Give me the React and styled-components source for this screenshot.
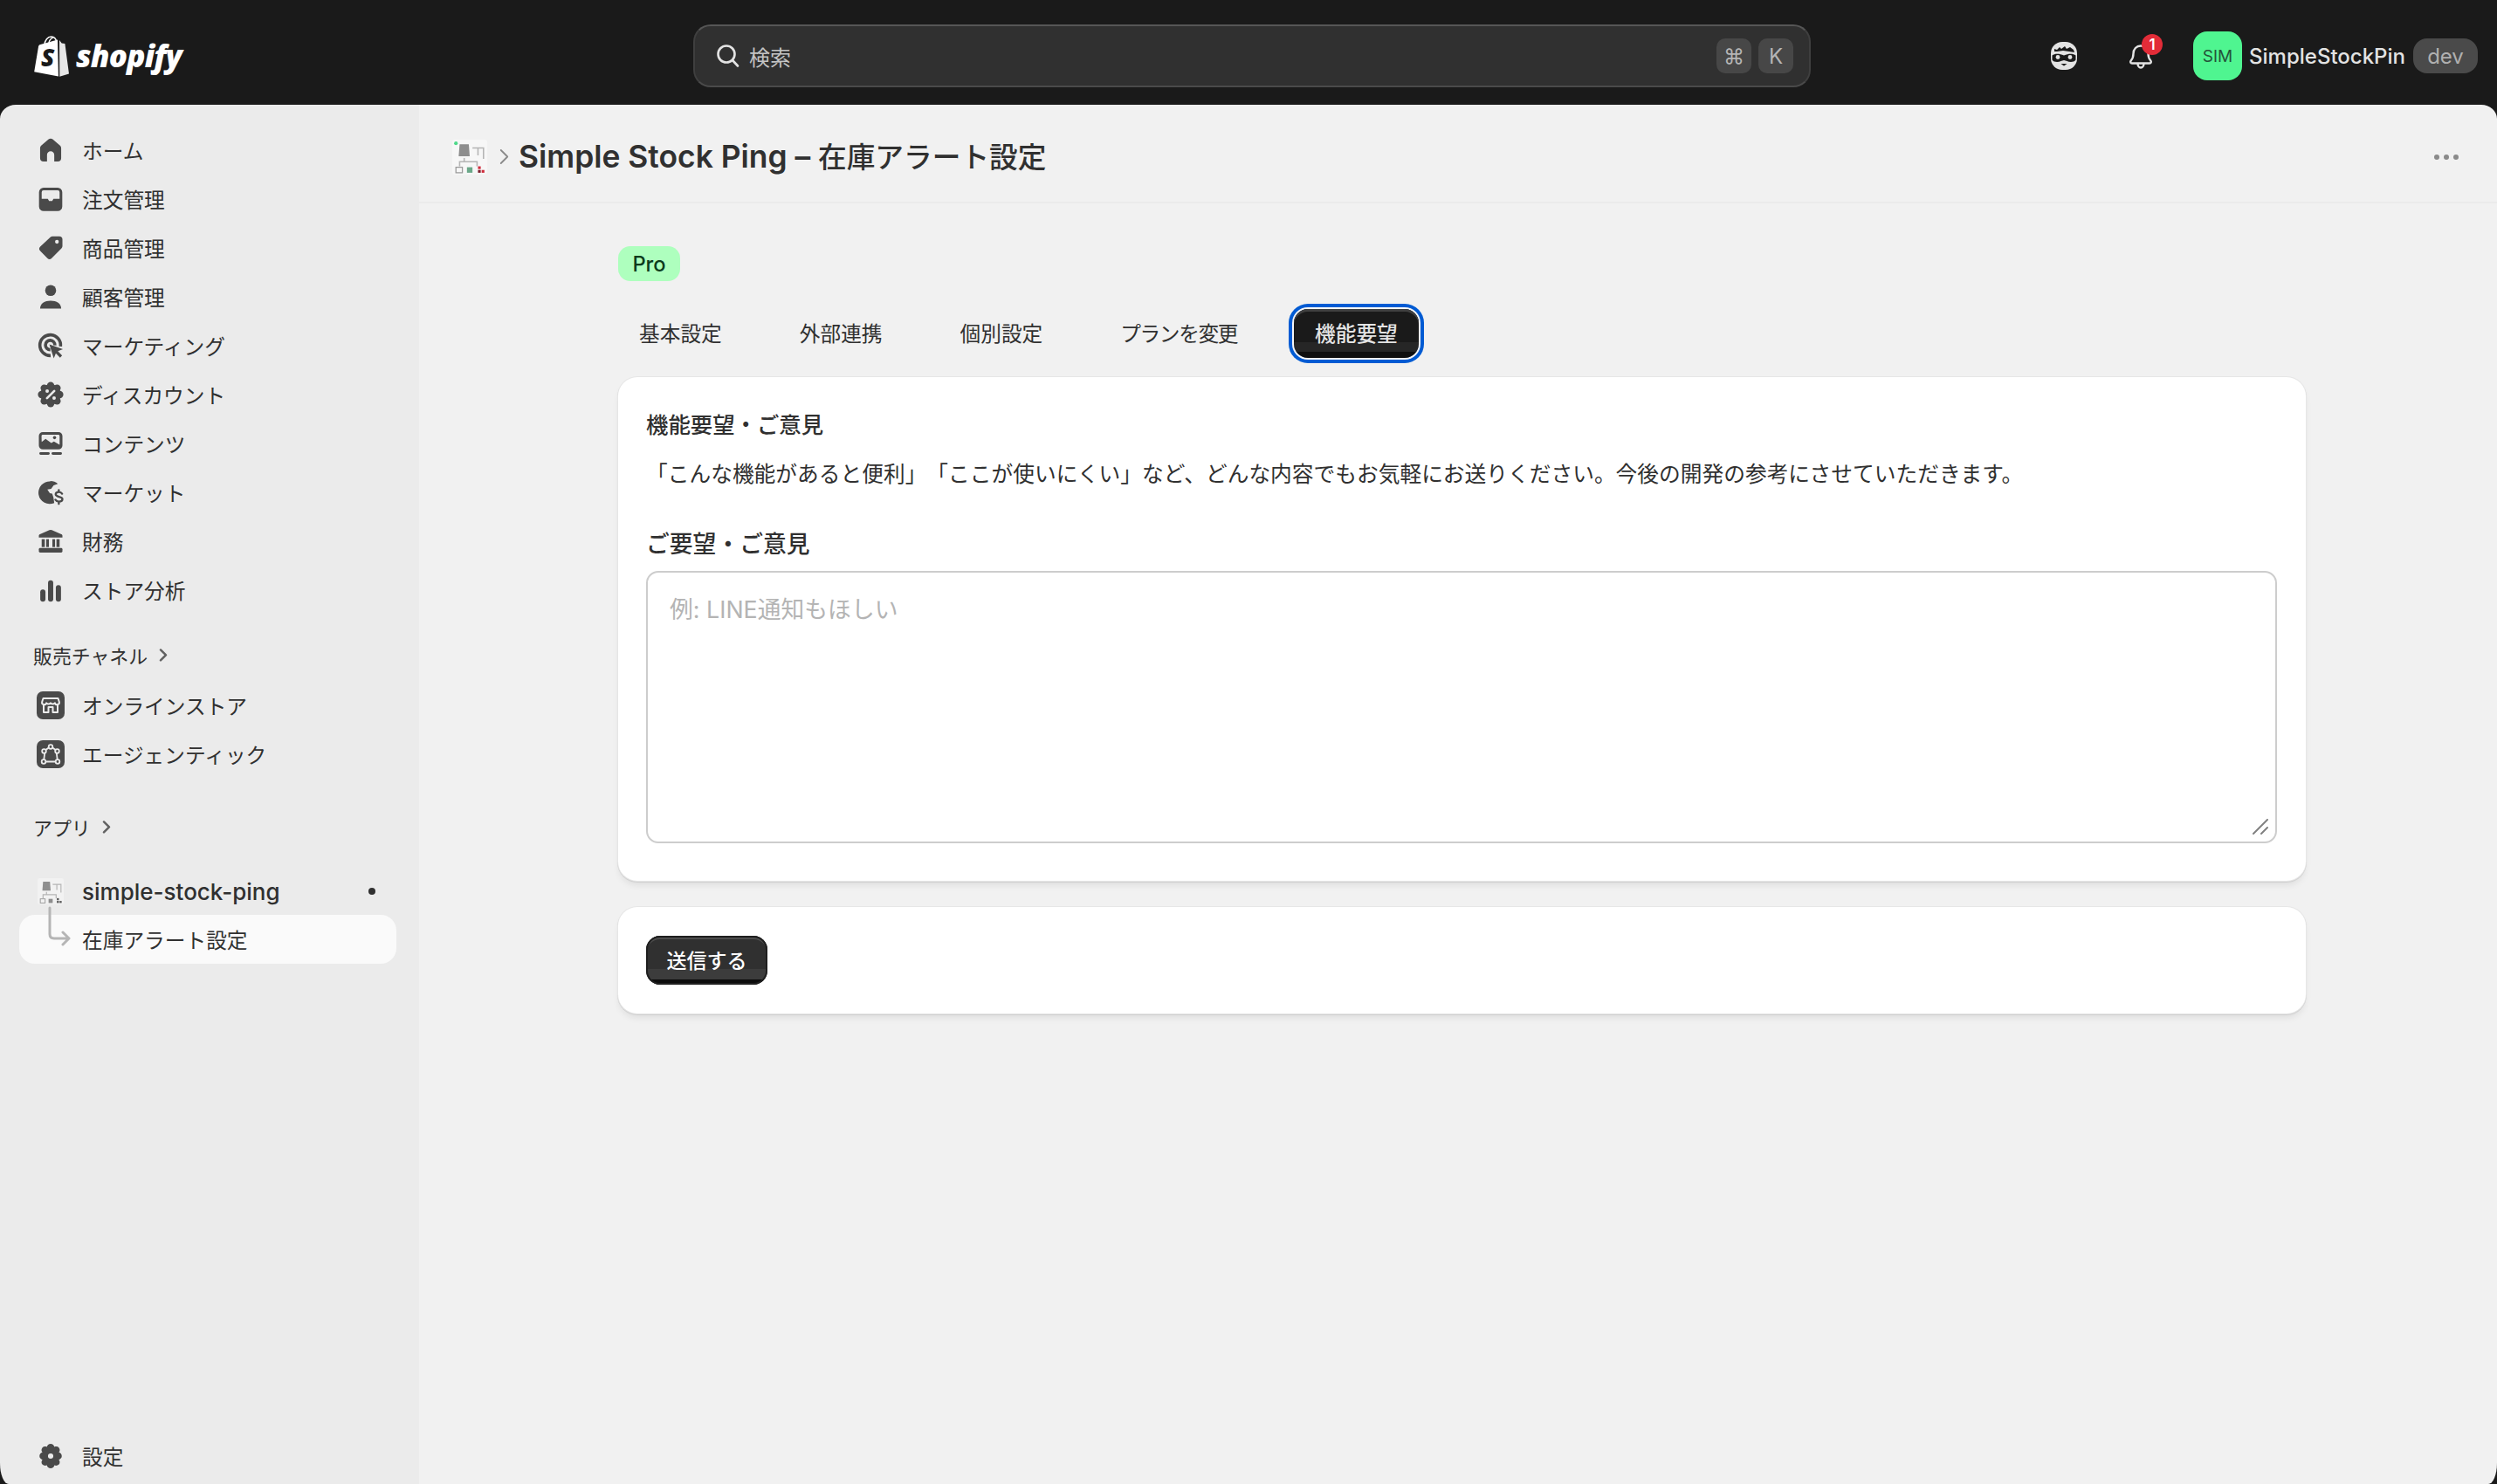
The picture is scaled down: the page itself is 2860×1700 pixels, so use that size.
import React from "react";
import styled, { createGlobalStyle } from "styled-components";

const GlobalStyle = createGlobalStyle`
  html, body {
    margin: 0;
    padding: 0;
    background: #1a1a1a;
  }
  body {
    font-family: Inter, "Noto Sans CJK JP", sans-serif;
    color: #303030;
  }
  * {
    box-sizing: border-box;
  }
`;

const Frame = styled.div`
  width: 2860px;
  height: 1700px;
  display: flex;
  flex-direction: column;
  overflow: hidden;
`;

const TopBar = styled.header`
  height: 120px;
  flex: none;
  display: flex;
  align-items: center;
  padding-top: 8px;
  background: #1a1a1a;
`;

const LogoSlot = styled.div`
  width: 794px;
  flex: none;
  padding-left: 39px;
  display: flex;
  align-items: center;
  gap: 8px;
`;

const LogoText = styled.span`
  font-family: "Open Sans", sans-serif;
  font-style: italic;
  font-weight: 800;
  font-size: 35px;
  line-height: 48px;
  letter-spacing: -0.8px;
  color: #fff;
`;

const SearchBox = styled.div`
  width: 1280px;
  height: 72px;
  flex: none;
  display: flex;
  align-items: center;
  padding: 0 18px 0 22px;
  background: #303030;
  border: 2px solid #3f3f3f;
  border-top-color: #565656;
  border-bottom-color: #4a4a4a;
  border-radius: 20px;
`;

const SearchText = styled.span`
  margin-left: 8px;
  flex: 1;
  font-size: 24px;
  color: #c4c4c4;
`;

const Key = styled.span`
  width: 40px;
  height: 40px;
  margin-left: 8px;
  display: flex;
  align-items: center;
  justify-content: center;
  font-size: 24px;
  color: #b5b5b5;
  background: #474747;
  border-radius: 10px;
`;

const TopRight = styled.div`
  flex: 1;
  display: flex;
  align-items: center;
  justify-content: flex-end;
  padding-right: 22px;
`;

const BellWrap = styled.div`
  position: relative;
  width: 30px;
  height: 30px;
  margin-left: 58px;
  margin-right: 45px;
`;

const BellBadge = styled.span`
  position: absolute;
  left: 16px;
  top: -10px;
  width: 24px;
  height: 24px;
  display: flex;
  align-items: center;
  justify-content: center;
  background: #e22c38;
  color: #fff;
  border-radius: 50%;
  font-size: 17px;
  font-weight: 600;
`;

const Avatar = styled.div`
  width: 56px;
  height: 56px;
  display: flex;
  align-items: center;
  justify-content: center;
  background: #4ff590;
  color: #24533a;
  border-radius: 16px;
  font-size: 19px;
`;

const StoreName = styled.span`
  margin-left: 8px;
  font-size: 24px;
  font-weight: 500;
  color: #e3e3e3;
`;

const DevPill = styled.span`
  width: 74px;
  height: 40px;
  margin-left: 9px;
  display: flex;
  align-items: center;
  justify-content: center;
  font-size: 24px;
  color: #b0b0b0;
  background: #4a4a4a;
  border-radius: 16px;
`;

const Body = styled.div`
  flex: 1;
  min-height: 0;
  display: flex;
  overflow: hidden;
  border-radius: 18px 18px 10px 10px / 16px 16px 24px 24px;
`;

const Sidebar = styled.nav`
  width: 480px;
  flex: none;
  display: flex;
  flex-direction: column;
  padding: 24px 26px 4px 22px;
  background: #ebebeb;
`;

const NavRow = styled.div`
  position: relative;
  height: 56px;
  flex: none;
  display: flex;
  align-items: center;
  gap: 18px;
  padding-left: 18px;
  font-size: 23.7px;
  color: #303030;
  border-radius: 18px;
  background: ${(p) => (p.$selected ? "#fafafa" : "transparent")};
  margin-top: ${(p) => p.$top || 0}px;
`;

const IconSlot = styled.span`
  width: 36px;
  height: 36px;
  flex: none;
  display: flex;
  align-items: center;
  justify-content: center;
`;

const AppName = styled.span`
  flex: 1;
  font-size: 26px;
  font-weight: 500;
`;

const UnreadDot = styled.span`
  width: 8px;
  height: 8px;
  margin-right: 24px;
  border-radius: 50%;
  background: #303030;
`;

const Connector = styled.svg`
  position: absolute;
  left: 33px;
  top: -10px;
`;

const SectionHead = styled.div`
  height: 56px;
  flex: none;
  display: flex;
  align-items: center;
  gap: 12px;
  padding-left: 16px;
  font-size: 21.9px;
  color: #303030;
  margin-top: ${(p) => p.$top}px;
`;

const SidebarFoot = styled.div`
  margin-top: auto;
`;

const Main = styled.main`
  flex: 1;
  min-width: 0;
  background: #f1f1f1;
`;

const PageHeader = styled.div`
  height: 113px;
  display: flex;
  align-items: center;
  padding: 8px 44px 0 38px;
  border-bottom: 2px solid #ebebeb;
`;

const Crumb = styled.div`
  display: flex;
  align-items: center;
  gap: 12px;
`;

const PageTitle = styled.h1`
  flex: 1;
  margin: 0 0 5px 9px;
  font-size: 32.7px;
  font-weight: 500;
  color: #303030;
`;

const TitleLatin = styled.span`
  font-size: 35.4px;
  font-weight: 600;
`;

const Content = styled.div`
  width: 1933px;
  margin-left: 228px;
  padding-top: 49px;
`;

const ProBadge = styled.span`
  width: 71px;
  height: 40px;
  display: flex;
  align-items: center;
  justify-content: center;
  font-size: 23.7px;
  font-weight: 500;
  color: #0c3b1c;
  background: #aeffbe;
  border-radius: 14px;
`;

const Tabs = styled.div`
  display: flex;
  gap: 41px;
  margin-top: 32px;
`;

const Tab = styled.button`
  height: 56px;
  padding: 0 24px 2px;
  font-family: inherit;
  font-size: 23.7px;
  font-weight: ${(p) => (p.$active ? 500 : 400)};
  letter-spacing: ${(p) => (p.$narrow ? "-1.4px" : "0")};
  color: ${(p) => (p.$active ? "#e3e3e3" : "#303030")};
  border: none;
  border-radius: 16px;
  background: ${(p) =>
    p.$active
      ? "linear-gradient(#1a1a1a 0 68%, #262626 68% 88%, #0f0f0f 88%)"
      : "transparent"};
  box-shadow: ${(p) =>
    p.$active
      ? "inset 0 3px 0 #3f3f3f, 0 0 0 2px #f6f6f6, 0 0 0 6px #005bd3"
      : "none"};
`;

const Card = styled.section`
  padding: ${(p) => p.$pad};
  margin-top: ${(p) => p.$top}px;
  background: #fff;
  border-radius: 22px;
  box-shadow: 0 0 0 1px #e6e6e6, 0 1px 0 1px #d0d0d0, 0 6px 8px -2px rgba(26, 26, 26, 0.1);
`;

const CardHeading = styled.h2`
  margin: 0;
  font-size: 25.4px;
  line-height: 36px;
  font-weight: 500;
  color: #303030;
`;

const Lead = styled.p`
  margin: 18px 0 0;
  font-size: 24.73px;
  line-height: 40px;
  text-spacing-trim: space-all;
  color: #303030;
`;

const FieldLabel = styled.label`
  display: block;
  margin-top: 42px;
  font-size: 26.8px;
  line-height: 36px;
  font-weight: 500;
  color: #303030;
`;

const AreaWrap = styled.div`
  position: relative;
  margin-top: 13px;
  height: 312px;
`;

const Area = styled.textarea`
  display: block;
  width: 100%;
  height: 100%;
  padding: 22px 25px;
  resize: none;
  font-family: inherit;
  font-size: 26.8px;
  line-height: 40px;
  color: #303030;
  border: 2px solid #cdcdcd;
  border-radius: 14px;
  outline: none;
  background: #fff;
  &::placeholder {
    color: #b4b4b4;
  }
`;

const Grip = styled.svg`
  position: absolute;
  right: 10px;
  bottom: 10px;
`;

const SubmitButton = styled.button`
  width: 139px;
  height: 56px;
  display: block;
  padding: 0 0 2px;
  font-family: inherit;
  font-size: 23px;
  font-weight: 500;
  color: #fff;
  border: none;
  border-radius: 16px;
  background: linear-gradient(#303030 0 68%, #3c3c3c 68% 90%, #0c0c0c 90%);
  box-shadow: inset 0 0 0 2px #1f1f1f, inset 0 4px 0 #4d4d4d;
`;

const paths = {
  home: (
    <path d="M10 2.6a2 2 0 0 1 1.3.5l4.7 4a2 2 0 0 1 .7 1.5V15a2.2 2.2 0 0 1-2.2 2.2h-2.2V13a2.3 2.3 0 0 0-4.6 0v4.200H5.500A2.200 2.200 0 0 1 3.300 15V8.600a2 2 0 0 1 .7-1.500l4.700-4A2 2 0 0 1 10 2.600z" />
  ),
  orders: (
    <path
      fillRule="evenodd"
      d="M5.500 2.800h9a2.900 2.900 0 0 1 2.900 2.900v9a2.900 2.900 0 0 1-2.900 2.900h-9a2.900 2.900 0 0 1-2.900-2.900v-9a2.900 2.900 0 0 1 2.900-2.900zM4.300 5.700v4.200h3.900l.8 1.400h2l.8-1.400h3.900V5.700a1.200 1.200 0 0 0-1.200-1.200h-9a1.200 1.200 0 0 0-1.200 1.200z"
    />
  ),
  tag: (
    <path
      fillRule="evenodd"
      d="M11.200 2.600h4.300a2 2 0 0 1 2 2v4.300a2 2 0 0 1-.6 1.400l-6.200 6.200a2 2 0 0 1-2.800 0l-4.500-4.500a2 2 0 0 1 0-2.800l6.400-6a2 2 0 0 1 1.400-.6zM14 4.900a1.200 1.200 0 1 0 0 2.400 1.200 1.200 0 0 0 0-2.400z"
    />
  ),
  person: (
    <>
      <circle cx="10" cy="6" r="3.500" />
      <path d="M3.300 17.500c0-3.200 2.900-5 6.700-5s6.700 1.800 6.700 5z" />
    </>
  ),
  marketing: (
    <>
      <path
        d="M10 16.300A6.600 6.600 0 1 1 16.300 10.500M9.800 12.600A3 3 0 1 1 12.700 9.800"
        fill="none"
        stroke="#4a4a4a"
        strokeWidth="2"
      />
      <path d="M9.200 9.200l8.600 3-3.200 1.300 2.700 2.800-1.300 1.300-2.700-2.800-1.300 3.300z" />
    </>
  ),
  discount: (
    <>
      <circle cx="10" cy="10" r="6.500" />
      {[0, 45, 90, 135, 180, 225, 270, 315].map((a) => (
        <circle
          key={a}
          cx={10 + 5.8 * Math.cos((a * Math.PI) / 180)}
          cy={10 + 5.8 * Math.sin((a * Math.PI) / 180)}
          r="2.300"
        />
      ))}
      <path d="M12.300 7.700l-4.600 4.600" stroke="#ebebeb" strokeWidth="1.500" strokeLinecap="round" />
      <circle cx="7.800" cy="7.800" r="1.100" fill="#ebebeb" />
      <circle cx="12.200" cy="12.200" r="1.100" fill="#ebebeb" />
    </>
  ),
  content: (
    <>
      <path
        fillRule="evenodd"
        d="M5 2.800h10a2.500 2.500 0 0 1 2.500 2.500v6a2.500 2.500 0 0 1-2.500 2.500H5a2.500 2.500 0 0 1-2.500-2.500v-6A2.500 2.500 0 0 1 5 2.800zM4.300 9l2.500-1.900 3.600 2.600 1.700-1 3.600 2.200V5.300a.8.800 0 0 0-.8-.8H5a.8.800 0 0 0-.8.8z"
      />
      <circle cx="12.500" cy="6.300" r="1" />
      <rect x="2.800" y="15.600" width="6.600" height="1.600" rx="0.800" />
      <rect x="10.600" y="15.600" width="6.600" height="1.600" rx="0.800" />
    </>
  ),
  markets: (
    <>
      <path d="M9.800 2.800a7.200 7.200 0 0 1 4.800 1.800l-2.700 1-1.600 2.200-2.400.4 1.600 2.400 1.500.3.800 2.400.5 3.500a7.200 7.200 0 1 1-2.500-13.800z" />
      <path
        d="M17.300 10.900c-.5-.8-1.300-1.100-2.100-1.100-1.200 0-2 .6-2 1.500 0 2 4.300 1 4.300 3 0 .9-.9 1.600-2.200 1.600-.9 0-1.800-.4-2.300-1.200M15.200 8.500v1.300M15.200 15.900v1.400"
        fill="none"
        stroke="#4a4a4a"
        strokeWidth="1.300"
        strokeLinecap="round"
      />
    </>
  ),
  finance: (
    <>
      <path d="M9.200 2.900a2 2 0 0 1 1.600 0l6 2.600c.5.200.7.600.7 1v1.200H2.500V6.500c0-.4.200-.8.700-1z" />
      <rect x="4.300" y="8.700" width="2" height="5" />
      <rect x="7.200" y="8.700" width="1.700" height="5" />
      <rect x="11.100" y="8.700" width="1.700" height="5" />
      <rect x="13.700" y="8.700" width="2" height="5" />
      <rect x="2.500" y="14.300" width="15" height="2.900" rx="0.800" />
    </>
  ),
  analytics: (
    <>
      <rect x="3.400" y="9.600" width="3.300" height="7.700" rx="1.650" />
      <rect x="8.350" y="3.800" width="3.300" height="13.500" rx="1.650" />
      <rect x="13.300" y="6.800" width="3.300" height="10.500" rx="1.650" />
    </>
  ),
  settings: (
    <path
      fillRule="evenodd"
      d="M10 2.200c1.200 0 2.200.9 2.400 2 .9-.5 2.100-.3 2.900.5.800 1 .6 2.200-.1 3 1.100.3 1.900 1.200 1.900 2.300s-.8 2-1.900 2.300c.7.800.9 2 .1 3-.8.800-2 1-2.900.5-.2 1.100-1.200 2-2.400 2s-2.200-.9-2.400-2c-.9.500-2.100.3-2.900-.5-.8-1-.6-2.200.1-3-1.100-.3-1.900-1.200-1.900-2.300s.8-2 1.900-2.300c-.7-.8-.9-2-.1-3 .8-.8 2-1 2.900-.5.200-1.100 1.200-2 2.400-2zM10 8.300a1.700 1.700 0 1 0 0 3.400 1.700 1.700 0 0 0 0-3.400z"
    />
  ),
};

const NavIcon = ({ name }) => (
  <svg width="36" height="36" viewBox="0 0 20 20" fill="#4a4a4a">
    {paths[name]}
  </svg>
);

const StoreIcon = () => (
  <svg width="32" height="32" viewBox="0 0 32 32">
    <rect width="32" height="32" rx="7" fill="#4a4a4a" />
    <path
      d="M8 14v10h5.500v-6h5v6H24V14M7.500 8h17l1.300 4a2.500 2.500 0 0 1-4.900 1.300 3.200 3.200 0 0 1-4.900 0 3.200 3.200 0 0 1-4.900 0A2.500 2.500 0 0 1 6.200 12z"
      fill="none"
      stroke="#ebebeb"
      strokeWidth="2"
      strokeLinejoin="round"
    />
  </svg>
);

const AgenticIcon = () => (
  <svg width="32" height="32" viewBox="0 0 32 32">
    <rect width="32" height="32" rx="7" fill="#4a4a4a" />
    <g fill="none" stroke="#ebebeb" strokeWidth="1.800">
      <path d="M13.500 8.800L9.800 11.500M18.500 8.800l3.700 2.700M9.300 14l-1 8M22.700 14l1 8M10.500 24.500h11" />
      <circle cx="16" cy="7.500" r="2.300" />
      <circle cx="8.500" cy="12.500" r="2.300" />
      <circle cx="23.500" cy="12.500" r="2.300" />
      <circle cx="8" cy="24.500" r="2.300" />
      <circle cx="24" cy="24.500" r="2.300" />
    </g>
  </svg>
);

const Chevron = ({ size = 12, color = "#616161", weight = 2 }) => (
  <svg width={size} height={size * 1.4} viewBox="0 0 10 14" fill="none">
    <path d="M2.500 2l5 5-5 5" stroke={color} strokeWidth={weight} strokeLinecap="round" strokeLinejoin="round" />
  </svg>
);

// small app thumbnail, same drawing in the sidebar and the page header
const AppThumb = ({ size = 30, tinted }) => (
  <svg width={size} height={size} viewBox="0 0 38 38">
    <rect width="38" height="38" rx="3" fill={tinted ? "#f7f7f7" : "#f2f2f2"} />
    {tinted && <circle cx="4" cy="4" r="2" fill="#4fd98a" />}
    <path d="M8 5h10l1 13H7z" fill="#8e8e8e" />
    <path d="M22 9h12v12M28 9v8M13 20v4h-5v5M13 24h14v5" fill="none" stroke="#b5b5b5" strokeWidth="1.500" />
    <rect x="4" y="30" width="7" height="6" fill="none" stroke="#9a9a9a" strokeWidth="1.200" />
    <rect x="16" y="30" width="6" height="6" fill={tinted ? "#6ba889" : "#8e8e8e"} />
    <rect x="28" y="29" width="3" height="3" fill={tinted ? "#cf2b3b" : "#5a5a5a"} />
    <rect x="32" y="33" width="3" height="3" fill={tinted ? "#cf2b3b" : "#5a5a5a"} />
    <rect x="28" y="33" width="3" height="3" fill={tinted ? "#7a1d2a" : "#5a5a5a"} />
  </svg>
);

const ShopifyBag = () => (
  <svg width="40" height="47" viewBox="0 0 40 47">
    <path
      d="M0.200 41.300L5 12.500c.3-1.400 1-2 2.300-2.400L27 4.500l.9 42z"
      fill="#fff"
    />
    <path d="M29 5l2.700 3.600 3.700.5L40 43.600 29.300 46.800z" fill="#e6e6e6" />
    <path
      d="M12 10.500C12.300 5 15.600 1 19.800 1c3.600 0 5.400 2.700 6.200 6.300M16.800 9c.4-3.300 2.300-6.300 5.700-7.400"
      fill="none"
      stroke="#fff"
      strokeWidth="1.500"
    />
    <text x="8" y="35" fontFamily="'Open Sans', sans-serif" fontStyle="italic" fontWeight="800" fontSize="28" fill="#1a1a1a">
      S
    </text>
  </svg>
);

const SearchIcon = () => (
  <svg width="32" height="32" viewBox="0 0 32 32" fill="none">
    <circle cx="14" cy="14" r="9.500" stroke="#e3e3e3" strokeWidth="2.600" />
    <path d="M21 21l6 6.500" stroke="#e3e3e3" strokeWidth="2.600" strokeLinecap="round" />
  </svg>
);

const MascotIcon = () => (
  <svg width="30" height="32" viewBox="0 0 30 32">
    <rect width="30" height="32" rx="13" fill="#e3e3e3" />
    <path d="M4 11V8l3 1 3-3 2 2 4-3 2 3 4-2 4 3 1 3-6-1-7-1-7 1z" fill="#1a1a1a" />
    <path d="M1.500 15.500c3-2.500 8-2.500 13.500 0 5.500-2.500 10.500-2.500 13.500 0v5c-2 3-7 3-10 1.500l-3.500-1-3.500 1c-3 1.500-8 1.500-10-1.500z" fill="#1a1a1a" />
    <circle cx="8" cy="17.500" r="2.400" fill="#e3e3e3" />
    <circle cx="22" cy="17.500" r="2.400" fill="#e3e3e3" />
    <path d="M11.500 25h7l-3.500 2.500z" fill="#1a1a1a" />
  </svg>
);

const BellIcon = () => (
  <svg width="30" height="32" viewBox="0 0 30 32" fill="none">
    <path
      d="M15 3.500c-5 0-8.500 3.800-8.500 9 0 4-1 6-2.800 8-1 1.300-.5 3 1.300 3h20c1.800 0 2.300-1.700 1.300-3-1.800-2-2.800-4-2.800-8 0-5.200-3.500-9-8.500-9zM11.500 23.800c0 2.600 1.500 4.700 3.500 4.700s3.500-2.100 3.500-4.700"
      stroke="#e3e3e3"
      strokeWidth="2.400"
      strokeLinejoin="round"
    />
  </svg>
);

const navItems = [
  ["home", "ホーム"],
  ["orders", "注文管理"],
  ["tag", "商品管理"],
  ["person", "顧客管理"],
  ["marketing", "マーケティング"],
  ["discount", "ディスカウント"],
  ["content", "コンテンツ"],
  ["markets", "マーケット"],
  ["finance", "財務"],
  ["analytics", "ストア分析"],
];

const tabs = ["基本設定", "外部連携", "個別設定", "プランを変更", "機能要望"];

export default function App() {
  return (
    <Frame>
      <GlobalStyle />
      <TopBar>
        <LogoSlot>
          <ShopifyBag />
          <LogoText>shopify</LogoText>
        </LogoSlot>
        <SearchBox>
          <SearchIcon />
          <SearchText>検索</SearchText>
          <Key>⌘</Key>
          <Key>K</Key>
        </SearchBox>
        <TopRight>
          <MascotIcon />
          <BellWrap>
            <BellIcon />
            <BellBadge>1</BellBadge>
          </BellWrap>
          <Avatar>SIM</Avatar>
          <StoreName>SimpleStockPin</StoreName>
          <DevPill>dev</DevPill>
        </TopRight>
      </TopBar>

      <Body>
        <Sidebar>
          {navItems.map(([icon, label]) => (
            <NavRow key={icon}>
              <IconSlot>
                <NavIcon name={icon} />
              </IconSlot>
              {label}
            </NavRow>
          ))}

          <SectionHead $top={18}>
            販売チャネル
            <Chevron />
          </SectionHead>
          <NavRow $top={2}>
            <IconSlot>
              <StoreIcon />
            </IconSlot>
            オンラインストア
          </NavRow>
          <NavRow>
            <IconSlot>
              <AgenticIcon />
            </IconSlot>
            エージェンティック
          </NavRow>

          <SectionHead $top={27}>
            アプリ
            <Chevron />
          </SectionHead>
          <NavRow $top={18}>
            <IconSlot>
              <AppThumb />
            </IconSlot>
            <AppName>simple-stock-ping</AppName>
            <UnreadDot />
          </NavRow>
          <NavRow $selected $top={-1}>
            <Connector width="26" height="46" viewBox="0 0 26 46" fill="none">
              <path
                d="M2 2v30c0 3 1.500 5 5 5h16M17 30l7 7-7 7"
                stroke="#b5b5b5"
                strokeWidth="3"
                strokeLinecap="round"
                strokeLinejoin="round"
              />
            </Connector>
            <IconSlot />
            在庫アラート設定
          </NavRow>

          <SidebarFoot>
            <NavRow>
              <IconSlot>
                <NavIcon name="settings" />
              </IconSlot>
              設定
            </NavRow>
          </SidebarFoot>
        </Sidebar>

        <Main>
          <PageHeader>
            <Crumb>
              <AppThumb size={40} tinted />
              <Chevron size={15} color="#8a8a8a" weight={1.2} />
            </Crumb>
            <PageTitle>
              <TitleLatin>Simple Stock Ping –</TitleLatin> 在庫アラート設定
            </PageTitle>
            <svg width="28" height="8" viewBox="0 0 28 8" fill="#8a8a8a">
              <circle cx="3" cy="4" r="3" />
              <circle cx="14" cy="4" r="3" />
              <circle cx="25" cy="4" r="3" />
            </svg>
          </PageHeader>

          <Content>
            <ProBadge>Pro</ProBadge>
            <Tabs>
              {tabs.map((t) => (
                <Tab key={t} $active={t === "機能要望"} $narrow={t === "プランを変更"}>
                  {t}
                </Tab>
              ))}
            </Tabs>

            <Card $top={22} $pad="37px 33px 43px 32px">
              <CardHeading>機能要望・ご意見</CardHeading>
              <Lead>
                「こんな機能があると便利」「ここが使いにくい」など、どんな内容でもお気軽にお送りください。今後の開発の参考にさせていただきます。
              </Lead>
              <FieldLabel>ご要望・ご意見</FieldLabel>
              <AreaWrap>
                <Area placeholder="例: LINE通知もほしい" readOnly />
                <Grip width="18" height="18" viewBox="0 0 18 18" fill="none">
                  <path d="M1 17L17 1M10 17l7-7" stroke="#808080" strokeWidth="2" strokeLinecap="round" />
                </Grip>
              </AreaWrap>
            </Card>

            <Card $top={30} $pad="33px 32px">
              <SubmitButton>送信する</SubmitButton>
            </Card>
          </Content>
        </Main>
      </Body>
    </Frame>
  );
}
